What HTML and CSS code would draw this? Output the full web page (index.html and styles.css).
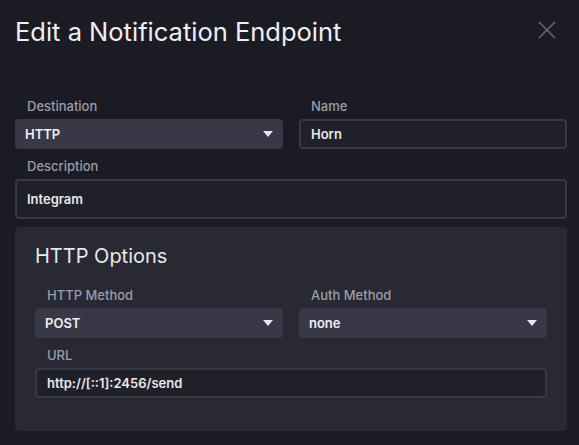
FILE: index.html
```html
<!DOCTYPE html>
<html lang="en">
<head>
<meta charset="utf-8">
<title>Edit a Notification Endpoint</title>
<link rel="stylesheet" href="styles.css">
</head>
<body>
<div class="overlay">
  <header class="overlay-header">
    <h1 class="overlay-title">Edit a Notification Endpoint</h1>
    <button class="close-btn" aria-label="Close">
      <svg width="18" height="18" viewBox="0 0 18 18"><path d="M1 1 L17 17 M17 1 L1 17" stroke="#676978" stroke-width="1.6" fill="none"/></svg>
    </button>
  </header>
  <div class="overlay-body">
    <div class="grid two">
      <div class="field">
        <label class="field-label">Destination</label>
        <div class="select">
          <span class="value">HTTP</span>
          <span class="caret"></span>
        </div>
      </div>
      <div class="field">
        <label class="field-label">Name</label>
        <div class="input">Horn</div>
      </div>
    </div>
    <div class="field">
      <label class="field-label">Description</label>
      <div class="input tall">Integram</div>
    </div>
    <section class="panel">
      <h2 class="panel-title">HTTP Options</h2>
      <div class="grid two">
        <div class="field">
          <label class="field-label">HTTP Method</label>
          <div class="select">
            <span class="value">POST</span>
            <span class="caret"></span>
          </div>
        </div>
        <div class="field">
          <label class="field-label">Auth Method</label>
          <div class="select">
            <span class="value">none</span>
            <span class="caret"></span>
          </div>
        </div>
      </div>
      <div class="field">
        <label class="field-label">URL</label>
        <div class="input">http://[::1]:2456/send</div>
      </div>
    </section>
  </div>
</div>
</body>
</html>
```
FILE: styles.css
```css
* { box-sizing: border-box; }
html, body {
  margin: 0;
  padding: 0;
  background: #1b1b23;
  font-family: Inter, Roboto, "Noto Sans", sans-serif;
  color: #e7e8eb;
}
.overlay {
  width: 579px;
  height: 445px;
  background: #1b1b23;
}
.overlay-header {
  display: flex;
  align-items: center;
  justify-content: space-between;
  height: 62px;
  padding: 0 15px 0 15px;
}
.overlay-title {
  margin: 0;
  font-size: 25.5px;
  font-weight: 400;
  color: #eeeff2;
  letter-spacing: 0;
}
.close-btn {
  background: none;
  border: none;
  padding: 0;
  width: 18px;
  height: 18px;
  margin-right: 8px;
  margin-top: -2px;
  display: flex;
}
.overlay-body {
  padding: 35px 12px 0 15px;
}
.grid.two {
  display: grid;
  grid-template-columns: 1fr 1fr;
  column-gap: 16px;
}
.field {
  display: flex;
  flex-direction: column;
  margin-bottom: 8px;
}
.field-label {
  display: block;
  height: 22px;
  line-height: 18px;
  padding-left: 12px;
  font-size: 13px;
  font-weight: 500;
  color: #999dab;
}
.select {
  height: 30px;
  border-radius: 4px;
  background: #383846;
  display: flex;
  align-items: center;
  justify-content: space-between;
  padding: 0 10px;
  font-size: 13px;
  font-weight: 600;
  color: #eeeff2;
}
.caret {
  width: 0;
  height: 0;
  border-left: 5px solid transparent;
  border-right: 5px solid transparent;
  border-top: 6px solid #e7e8eb;
}
.input {
  height: 30px;
  border: 2px solid #383846;
  border-radius: 4px;
  background: #202028;
  display: flex;
  align-items: center;
  padding: 0 10px;
  font-size: 13px;
  font-weight: 600;
  color: #e7e8eb;
}
.input.tall {
  height: 40px;
}
.panel {
  background: #292933;
  border-radius: 4px;
  padding: 16px 20px 25px 20px;
}
.panel-title {
  margin: 0 0 17px 0;
  font-size: 20px;
  font-weight: 400;
  line-height: 26px;
  color: #e7e8eb;
}
```
